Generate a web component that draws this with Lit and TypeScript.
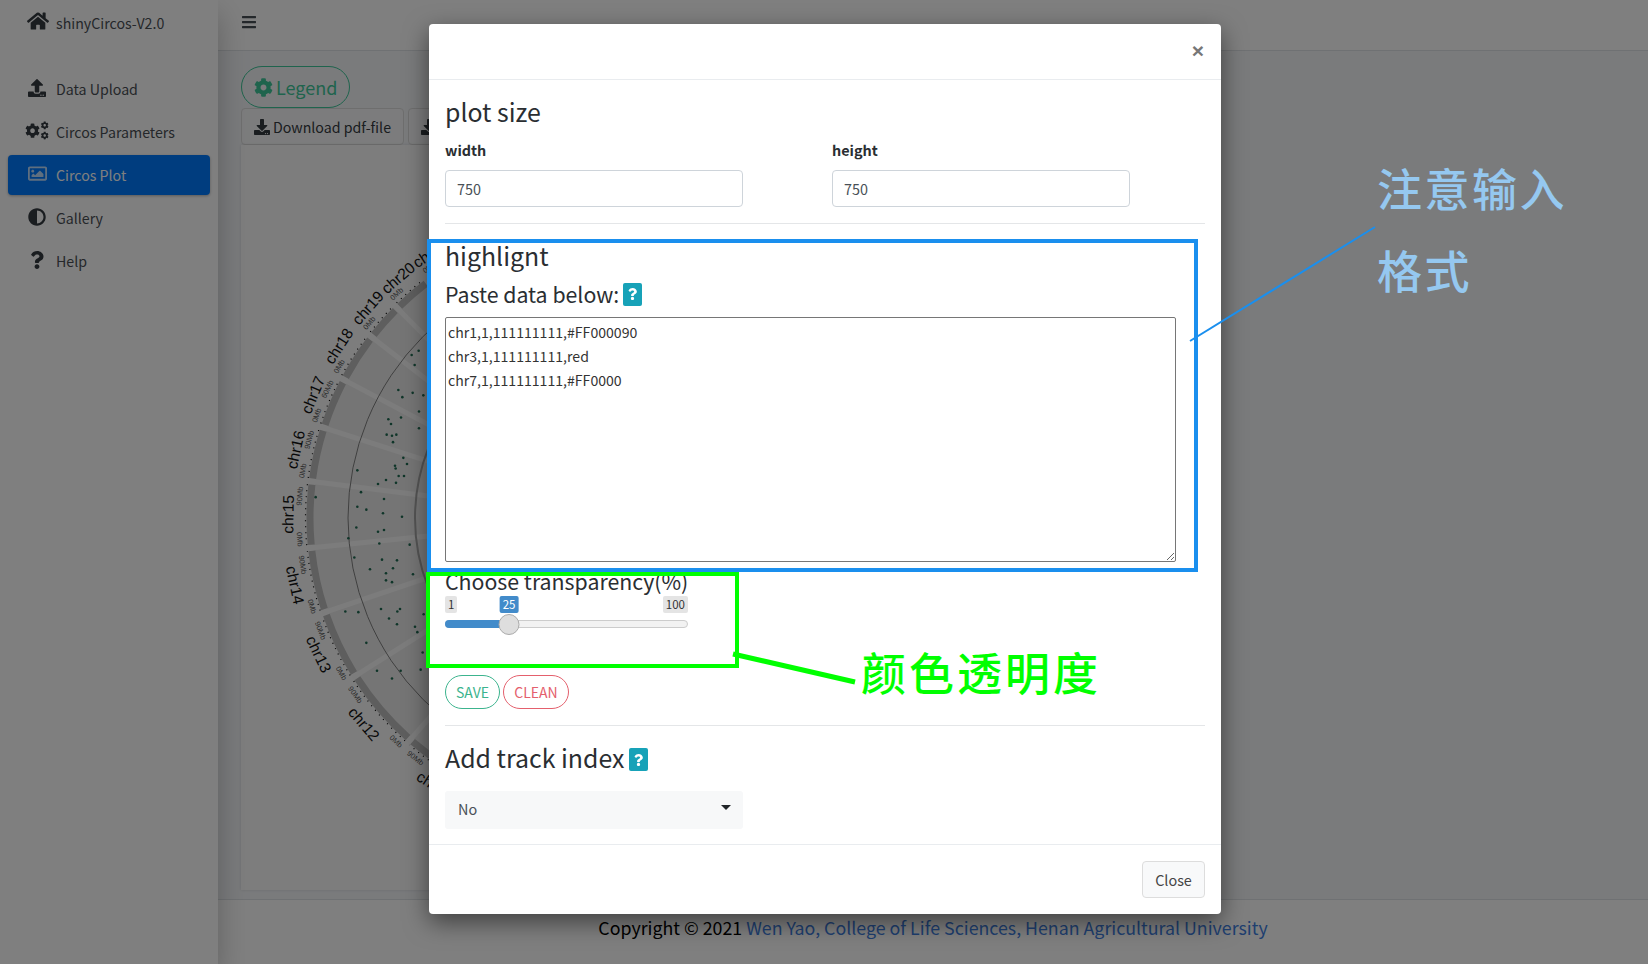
import { LitElement, html, css, svg } from 'lit';
import { customElement } from 'lit/decorators.js';

const COG = 'M487.4 315.7l-42.6-24.6c4.3-23.2 4.3-47 0-70.2l42.6-24.6c4.9-2.8 7.1-8.6 5.5-14-11.1-35.6-30-67.8-54.7-94.6-3.8-4.1-10-5.1-14.8-2.3L380.8 110c-17.9-15.4-38.5-27.3-60.8-35.1V25.8c0-5.6-3.9-10.5-9.4-11.7-36.7-8.2-74.3-7.8-109.2 0-5.5 1.2-9.4 6.1-9.4 11.7V75c-22.2 7.9-42.8 19.8-60.8 35.1L88.7 85.5c-4.9-2.8-11-1.9-14.8 2.3-24.7 26.7-43.6 58.9-54.7 94.6-1.7 5.4.6 11.2 5.5 14L67.3 221c-4.3 23.2-4.3 47 0 70.2l-42.6 24.6c-4.9 2.8-7.1 8.6-5.5 14 11.1 35.6 30 67.8 54.7 94.6 3.8 4.1 10 5.1 14.8 2.3l42.6-24.6c17.9 15.4 38.5 27.3 60.8 35.1v49.2c0 5.6 3.9 10.5 9.4 11.7 36.7 8.2 74.3 7.8 109.2 0 5.5-1.2 9.4-6.1 9.4-11.7v-49.2c22.2-7.9 42.8-19.8 60.8-35.1l42.6 24.6c4.9 2.8 11 1.9 14.8-2.3 24.7-26.7 43.6-58.9 54.7-94.6 1.5-5.5-.7-11.3-5.6-14.1zM256 336c-44.1 0-80-35.9-80-80s35.9-80 80-80 80 35.9 80 80-35.9 80-80 80z';
const DOWNLOAD = 'M216 0h80c13.3 0 24 10.7 24 24v168h87.7c17.8 0 26.7 21.5 14.1 34.1L269.7 378.3c-7.5 7.5-19.8 7.5-27.3 0L90.1 226.1c-12.6-12.6-3.7-34.1 14.1-34.1H192V24c0-13.3 10.7-24 24-24zm296 376v112c0 13.3-10.7 24-24 24H24c-13.3 0-24-10.7-24-24V376c0-13.3 10.7-24 24-24h146.7l49 49c20.1 20.1 52.5 20.1 72.6 0l49-49H488c13.3 0 24 10.7 24 24zm-124 88c0-11-9-20-20-20s-20 9-20 20 9 20 20 20 20-9 20-20zm64 0c0-11-9-20-20-20s-20 9-20 20 9 20 20 20 20-9 20-20z';
const UPLOAD = 'M296 384h-80c-13.3 0-24-10.7-24-24V192h-87.7c-17.8 0-26.7-21.5-14.1-34.1L242.3 5.7c7.5-7.5 19.8-7.5 27.3 0l152.2 152.2c12.6 12.6 3.7 34.1-14.1 34.1H320v168c0 13.3-10.7 24-24 24zm216-8v112c0 13.3-10.7 24-24 24H24c-13.3 0-24-10.7-24-24V376c0-13.3 10.7-24 24-24h136v8c0 30.9 25.1 56 56 56h80c30.9 0 56-25.1 56-56v-8h136c13.3 0 24 10.7 24 24zm-124 88c0-11-9-20-20-20s-20 9-20 20 9 20 20 20 20-9 20-20zm64 0c0-11-9-20-20-20s-20 9-20 20 9 20 20 20 20-9 20-20z';
const HOME = 'M280.37 148.26L96 300.11V464a16 16 0 0 0 16 16l112.06-.29a16 16 0 0 0 15.92-16V368a16 16 0 0 1 16-16h64a16 16 0 0 1 16 16v95.64a16 16 0 0 0 16 16.05L464 480a16 16 0 0 0 16-16V300L295.67 148.26a12.19 12.19 0 0 0-15.3 0zM571.6 251.47L488 182.56V44.05a12 12 0 0 0-12-12h-56a12 12 0 0 0-12 12v72.61L318.47 43a48 48 0 0 0-61 0L4.34 251.47a12 12 0 0 0-1.6 16.9l25.5 31A12 12 0 0 0 45.15 301l235.22-193.74a12.19 12.19 0 0 1 15.3 0L530.9 301a12 12 0 0 0 16.9-1.6l25.5-31a12 12 0 0 0-1.7-16.93z';
const IMAGE = 'M464 64H48C21.49 64 0 85.49 0 112v288c0 26.51 21.49 48 48 48h416c26.51 0 48-21.49 48-48V112c0-26.51-21.49-48-48-48zm-6 336H54a6 6 0 0 1-6-6V118a6 6 0 0 1 6-6h404a6 6 0 0 1 6 6v276a6 6 0 0 1-6 6zM128 152c-22.091 0-40 17.909-40 40s17.909 40 40 40 40-17.909 40-40-17.909-40-40-40zM96 352h320v-80l-87.515-87.515c-4.686-4.686-12.284-4.686-16.971 0L192 304l-39.515-39.515c-4.686-4.686-12.284-4.686-16.971 0L96 304v48z';
const ADJUST = 'M8 256c0 136.967 111.033 248 248 248s248-111.033 248-248S392.967 8 256 8 8 119.033 8 256zm248 184V72c101.705 0 184 82.311 184 184 0 101.705-82.311 184-184 184z';
const QUESTION = 'M202.021 0C122.202 0 70.503 32.703 29.914 91.026c-7.363 10.58-5.093 25.086 5.178 32.874l43.138 32.709c10.373 7.865 25.132 6.026 33.253-4.148 25.049-31.381 43.63-49.449 82.757-49.449 30.764 0 68.816 19.799 68.816 49.631 0 22.552-18.617 34.134-48.993 51.164-35.423 19.86-82.299 44.576-82.299 106.405V320c0 13.255 10.745 24 24 24h72.471c13.255 0 24-10.745 24-24v-5.773c0-42.86 125.268-44.645 125.268-160.627C377.504 66.256 286.902 0 202.021 0zM192 373.459c-38.196 0-69.271 31.075-69.271 69.271 0 38.195 31.075 69.27 69.271 69.27s69.271-31.075 69.271-69.271-31.075-69.27-69.271-69.27z';
const BARS = 'M16 132h416c8.837 0 16-7.163 16-16V76c0-8.837-7.163-16-16-16H16C7.163 60 0 67.163 0 76v40c0 8.837 7.163 16 16 16zm0 160h416c8.837 0 16-7.163 16-16v-40c0-8.837-7.163-16-16-16H16c-8.837 0-16 7.163-16 16v40c0 8.837 7.163 16 16 16zm0 160h416c8.837 0 16-7.163 16-16v-40c0-8.837-7.163-16-16-16H16c-8.837 0-16 7.163-16 16v40c0 8.837 7.163 16 16 16z';

const icon = (d: string, w: number, h: number, vw = 512) =>
  html`<svg width=${w} height=${h} viewBox="0 0 ${vw} 512" fill="currentColor"><path d=${d}></path></svg>`;

const cogsIcon = html`<svg width="24" height="19" viewBox="0 0 640 512" fill="currentColor">
  <g transform="translate(0 60) scale(.78)"><path d=${COG}></path></g>
  <g transform="translate(420 10) scale(.42)"><path d=${COG}></path></g>
  <g transform="translate(420 285) scale(.42)"><path d=${COG}></path></g>
</svg>`;

// circos plot, in page coordinates
const CX = 605;
const CY = 518;
const R = 298;

const CHROMS: [string, number, number, string][] = [
  ['chr11', -66, -48.7, '90Mb'],
  ['chr12', -48.7, -32.3, '90Mb'],
  ['chr13', -32.3, -18.6, '90Mb'],
  ['chr14', -18.6, -5.8, '90Mb'],
  ['chr15', -5.8, 7.1, '90Mb'],
  ['chr16', 7.1, 17.8, '90Mb'],
  ['chr17', 17.8, 27.9, '60Mb'],
  ['chr18', 27.9, 37.8, ''],
  ['chr19', 37.8, 45.3, ''],
  ['chr20', 45.3, 53.2, ''],
  ['chr21', 53.2, 60, ''],
];

const DOTS = [[455,322],[476,310],[464,350],[415,420],[427,440],[458,428],[490,435],[477,480],[385,502],[393,515],[423,497],[380,545],[396,548],[409,545],[399,566],[477,527],[430,610],[441,627],[405,632],[407,640],[416,661],[432,661],[408,680],[378,672],[354,683],[292,645],[303,706],[372,725],[167,720],[292,747],[319,755],[369,765],[426,775],[289,805],[354,817],[372,812],[358,850],[449,853],[265,835],[283,889],[366,895],[411,897],[330,922],[399,919],[378,933],[459,936],[378,953],[396,958],[256,1040],[295,1042],[363,1033],[420,1033],[412,1040],[387,1060],[491,1048],[411,1076],[465,1083],[472,1098],[319,1128],[488,1155],[351,1206],[422,1206],[482,1203],[396,1228]];

const polar = (r: number, deg: number) => {
  const a = (deg * Math.PI) / 180;
  return [CX - r * Math.cos(a), CY - r * Math.sin(a)];
};

const arc = (r: number, from: number, to: number) => {
  const [x1, y1] = polar(r, from);
  const [x2, y2] = polar(r, to);
  return `M${x1} ${y1}A${r} ${r} 0 0 1 ${x2} ${y2}`;
};

const radialText = (r: number, deg: number, text: string, cls: string) => {
  const [x, y] = polar(r, deg);
  const rot = deg > -3 ? deg - 90 : deg + 90;
  return svg`<text class=${cls} x=${x} y=${y} text-anchor="middle" dominant-baseline="central" transform="rotate(${rot} ${x} ${y})">${text}</text>`;
};

const circos = () => svg`
  <circle class="sector" cx=${CX} cy=${CY} r=${R - 6}></circle>
  ${CHROMS.map(([, low]) => {
    const [x1, y1] = polar(R + 1, low);
    const [x2, y2] = polar(140, low);
    return svg`<line class="spoke" x1=${x1} y1=${y1} x2=${x2} y2=${y2}></line>`;
  })}
  <circle class="ring" cx=${CX} cy=${CY} r="257"></circle>
  <circle class="ring inner" cx=${CX} cy=${CY} r="190"></circle>
  ${CHROMS.map(([name, low, high, last]) => {
    const mid = (low + high) / 2;
    return svg`
      <path class="band" d=${arc(R - 3, low + 0.6, high - 0.6)}></path>
      <path class="ticks" d=${arc(R + 1.5, low + 0.6, high - 0.6)}></path>
      ${radialText(317, mid, name, 'chr')}
      ${radialText(306, low + 1.8, '0Mb', 'mb')}
      ${last ? radialText(306, high - 3, last, 'mb') : ''}
    `;
  })}
  ${DOTS.map(([x, y]) => svg`<circle class="dot" cx=${260 + x / 3} cy=${240 + y / 2.8} r="1.3"></circle>`)}
`;

@customElement('app-root')
export class AppRoot extends LitElement {
  static styles = css`
    :host {
      display: block;
      position: relative;
      width: 1648px;
      height: 964px;
      overflow: hidden;
      font-family: 'Noto Sans CJK SC', 'Noto Sans', sans-serif;
      font-size: 14.2px;
      color: #2a2e32;
    }

    * {
      box-sizing: border-box;
    }

    .app {
      display: grid;
      grid-template-columns: 218px 1fr;
      height: 100%;
      background: #f4f6f9;
    }

    .sidebar {
      background: #fff;
      box-shadow: 0 14px 28px rgba(0, 0, 0, 0.25);
      color: #4a4f55;
      z-index: 1;
    }

    .brand {
      display: flex;
      align-items: center;
      gap: 7px;
      height: 45px;
      padding-left: 27px;
      font-size: 14.2px;
    }

    .brand svg {
      color: #343a40;
      margin-top: -3px;
    }

    .nav {
      display: flex;
      flex-direction: column;
      gap: 3px;
      padding: 24px 8px 0;
    }

    .nav-item {
      display: flex;
      align-items: center;
      height: 40px;
      border-radius: 4px;
      font-size: 14.2px;
    }

    .nav-item .ico {
      display: flex;
      justify-content: center;
      color: #343a40;
      width: 48px;
      padding-left: 10px;
      margin-top: -3px;
    }

    .nav-item.active {
      background: #007bff;
      color: #fff;
      box-shadow: 0 1px 3px rgba(0, 0, 0, 0.3);
    }

    .nav-item.active .ico {
      color: #fff;
      opacity: 0.75;
    }

    .main {
      display: flex;
      flex-direction: column;
      min-width: 0;
    }

    .topbar {
      display: flex;
      align-items: center;
      height: 51px;
      padding: 0 0 6px 24px;
      background: #fff;
      border-bottom: 1px solid #dee2e6;
      color: #495057;
    }

    .content {
      flex: 1;
      min-height: 0;
      padding: 15px 0 9px 23px;
      display: flex;
      flex-direction: column;
      align-items: flex-start;
    }

    .btn-legend {
      display: flex;
      align-items: center;
      gap: 3px;
      height: 42px;
      width: 109px;
      padding-left: 12px;
      border: 1.5px solid #3fc89a;
      border-radius: 21px;
      color: #3fc89a;
      font-size: 18px;
    }

    .tools {
      display: flex;
      gap: 4px;
    }

    .btn-tool {
      display: flex;
      align-items: center;
      gap: 3px;
      height: 37px;
      padding: 0 12px;
      border: 1px solid #ddd;
      border-radius: 4px;
      font-size: 14.2px;
      background: #f8f9fa;
      color: #343a40;
    }

    .card {
      width: 760px;
      flex: 1;
      min-height: 0;
      background: #fbfbfb;
      box-shadow: 0 0 3px rgba(0, 0, 0, 0.12);
    }

    .card svg {
      display: block;
    }

    .sector {
      fill: #ebebeb;
    }

    .spoke {
      stroke: #f9f9f9;
      stroke-width: 5;
    }

    .ring {
      fill: none;
      stroke: #808080;
      stroke-width: 1;
    }

    .ring.inner {
      stroke: #a8a8a8;
      stroke-width: 2;
    }

    .band {
      fill: none;
      stroke: #bcbcbc;
      stroke-width: 7;
    }

    .ticks {
      fill: none;
      stroke: #000;
      stroke-width: 1.2;
      stroke-dasharray: 1 5;
    }

    .chr {
      font-family: 'Liberation Sans', sans-serif;
      font-size: 15.5px;
      fill: #111;
    }

    .mb {
      font-family: 'Liberation Sans', sans-serif;
      font-size: 7.5px;
      fill: #555;
    }

    .dot {
      fill: #1f6a52;
    }

    .footer {
      height: 65px;
      padding-top: 14px;
      border-top: 1px solid #dee2e6;
      background: #fff;
      text-align: center;
      font-size: 17.8px;
      line-height: 26px;
      color: #000;
    }

    .footer a {
      color: #3f7fe0;
    }

    .backdrop {
      position: absolute;
      inset: 0;
      background: rgba(0, 0, 0, 0.5);
      z-index: 2;
    }

    .modal {
      position: absolute;
      left: 429px;
      top: 24px;
      width: 792px;
      height: 890px;
      display: flex;
      flex-direction: column;
      background: #fff;
      border-radius: 4px;
      box-shadow: 0 8px 24px rgba(0, 0, 0, 0.5);
      z-index: 3;
    }

    .modal-header {
      display: flex;
      justify-content: flex-end;
      align-items: center;
      height: 56px;
      padding: 0 15px 0 0;
      border-bottom: 1px solid #e9ecef;
    }

    .close-x {
      font-family: 'Liberation Sans', sans-serif;
      font-size: 21px;
      font-weight: 700;
      color: #777;
      width: 16px;
      text-align: center;
      margin-top: -1px;
    }

    .modal-body {
      flex: 1;
      padding: 16px 16px 0;
    }

    h3 {
      margin: 0;
      padding-bottom: 4px;
      font-size: 24.9px;
      font-weight: 400;
      line-height: 30px;
    }

    hr {
      margin: 16px 0;
      border: 0;
      border-top: 1px solid #e4e6e8;
    }

    .size-row {
      display: grid;
      grid-template-columns: 298px 298px;
      column-gap: 89px;
      margin-top: 8px;
    }

    .size-row label {
      display: block;
      font-weight: 700;
      font-size: 14.4px;
      line-height: 24px;
      margin-bottom: 8px;
    }

    .field {
      height: 37px;
      padding: 0 11px;
      display: flex;
      align-items: center;
      border: 1px solid #ced4da;
      border-radius: 4px;
      color: #495057;
      font-size: 14.4px;
    }

    .field-label {
      display: flex;
      align-items: center;
      gap: 4px;
      font-size: 21.3px;
      line-height: 26px;
    }

    .paste {
      margin-top: 7px;
      padding-bottom: 1px;
    }

    .help {
      display: inline-flex;
      align-items: center;
      justify-content: center;
      width: 19px;
      height: 23px;
      background: #17a2b8;
      border-radius: 2px;
      color: #fff;
    }

    .data {
      display: block;
      width: 731px;
      height: 245px;
      margin-top: 9px;
      padding: 2px 2px;
      border: 1px solid #767676;
      border-radius: 2px;
      color: #333;
      font-family: inherit;
      font-size: 14.1px;
      line-height: 24px;
      white-space: pre;
      resize: both;
      outline: none;
      overflow: hidden;
    }

    .transparency {
      margin-top: 6px;
      height: 107px;
    }

    .slider {
      position: relative;
      width: 243px;
      height: 40px;
      margin-top: 2px;
    }

    .tag {
      position: absolute;
      top: 0;
      height: 17px;
      padding: 0 3px;
      background: #e4e4e4;
      border-radius: 2px;
      color: #333;
      font-size: 11.5px;
      line-height: 17px;
    }

    .tag.max {
      right: 0;
    }

    .tag.value {
      background: #428bca;
      color: #fff;
      transform: translateX(-50%);
    }

    .track {
      position: absolute;
      left: 0;
      right: 0;
      top: 24px;
      height: 8px;
      border: 1px solid #ccc;
      border-radius: 4px;
      background: #f2f2f2;
    }

    .fill {
      position: absolute;
      left: 0;
      top: 24px;
      height: 8px;
      border-radius: 4px 0 0 4px;
      background: #428bca;
    }

    .thumb {
      position: absolute;
      top: 18px;
      width: 21px;
      height: 21px;
      border: 1px solid #ababab;
      border-radius: 50%;
      background: #dedede;
      transform: translateX(-50%);
    }

    .actions {
      display: flex;
      gap: 3px;
    }

    .pill {
      display: flex;
      align-items: center;
      justify-content: center;
      height: 34px;
      border-radius: 17px;
      font-size: 14px;
    }

    .pill.save {
      width: 55px;
      color: #3cb48e;
      border: 1px solid #3cb48e;
    }

    .pill.clean {
      width: 66px;
      color: #e4606d;
      border: 1px solid #e4606d;
    }

    .track-index {
      display: flex;
      align-items: center;
      gap: 5px;
    }

    .track-index .help {
      margin-top: 5px;
    }

    .select {
      display: flex;
      align-items: center;
      justify-content: space-between;
      width: 298px;
      height: 38px;
      margin-top: 15px;
      padding: 0 12px 3px 13px;
      background: #f7f8f9;
      border-radius: 3px;
      color: #495057;
      font-size: 14.4px;
    }

    .caret {
      width: 0;
      height: 0;
      margin-top: -2px;
      border-left: 5px solid transparent;
      border-right: 5px solid transparent;
      border-top: 5px solid #212529;
    }

    .modal-footer {
      display: flex;
      justify-content: flex-end;
      padding: 16px;
      border-top: 1px solid #e9ecef;
    }

    .btn-close {
      display: flex;
      align-items: center;
      justify-content: center;
      width: 63px;
      height: 37px;
      background: #f8f9fa;
      border: 1px solid #ddd;
      border-radius: 4px;
      color: #444;
      font-size: 14.4px;
    }

    .note {
      position: absolute;
      z-index: 4;
      pointer-events: none;
    }

    .box-blue {
      left: 427px;
      top: 239px;
      width: 771px;
      height: 333px;
      border: 4px solid #1a8fee;
    }

    .box-green {
      left: 426px;
      top: 572px;
      width: 313px;
      height: 96px;
      border: 4px solid #00ff00;
    }

    .note-lines {
      left: 0;
      top: 0;
    }

    .note-text {
      font-size: 45px;
      font-weight: 500;
      white-space: nowrap;
    }

    .note-format {
      left: 1377px;
      top: 147px;
      width: 200px;
      color: #95c8f0;
      letter-spacing: 2.5px;
      line-height: 82px;
      white-space: normal;
    }

    .note-alpha {
      left: 861px;
      top: 639px;
      color: #00ff00;
      letter-spacing: 3px;
      line-height: 66px;
    }
  `;

  render() {
    const pct = (25 - 1) / 99;
    const thumbX = 10 + pct * 223;
    return html`
      <div class="app">
        <aside class="sidebar">
          <div class="brand">${icon(HOME, 22, 20, 576)}<span>shinyCircos-V2.0</span></div>
          <nav class="nav">
            <div class="nav-item"><span class="ico">${icon(UPLOAD, 18, 18)}</span>Data Upload</div>
            <div class="nav-item"><span class="ico">${cogsIcon}</span>Circos Parameters</div>
            <div class="nav-item active"><span class="ico">${icon(IMAGE, 19, 19)}</span>Circos Plot</div>
            <div class="nav-item"><span class="ico">${icon(ADJUST, 18, 18)}</span>Gallery</div>
            <div class="nav-item"><span class="ico">${icon(QUESTION, 14, 18, 384)}</span>Help</div>
          </nav>
        </aside>
        <div class="main">
          <header class="topbar">${icon(BARS, 14, 16, 448)}</header>
          <section class="content">
            <div class="btn-legend">${icon(COG, 19, 19)}<span>Legend</span></div>
            <div class="tools">
              <div class="btn-tool">${icon(DOWNLOAD, 16, 16)}<span>Download pdf-file</span></div>
              <div class="btn-tool">${icon(DOWNLOAD, 16, 16)}<span>Download svg-file</span></div>
            </div>
            <div class="card">
              <svg width="760" height="745" viewBox="241 145 760 745">${circos()}</svg>
            </div>
          </section>
          <footer class="footer">
            Copyright © 2021 <a>Wen Yao, College of Life Sciences, Henan Agricultural University</a>
          </footer>
        </div>
      </div>

      <div class="backdrop"></div>

      <div class="modal">
        <div class="modal-header"><span class="close-x">×</span></div>
        <div class="modal-body">
          <h3>plot size</h3>
          <div class="size-row">
            <div><label>width</label><div class="field">750</div></div>
            <div><label>height</label><div class="field">750</div></div>
          </div>
          <hr />
          <h3>highlignt</h3>
          <div class="field-label paste">
            Paste data below:<span class="help">${icon(QUESTION, 9, 14, 384)}</span>
          </div>
          <textarea class="data" .value=${'chr1,1,111111111,#FF000090\nchr3,1,111111111,red\nchr7,1,111111111,#FF0000'}></textarea>
          <div class="transparency">
            <div class="field-label">Choose transparency(%)</div>
            <div class="slider">
              <span class="tag">1</span>
              <span class="tag max">100</span>
              <span class="tag value" style="left:${thumbX}px">25</span>
              <div class="track"></div>
              <div class="fill" style="width:${thumbX}px"></div>
              <div class="thumb" style="left:${thumbX}px"></div>
            </div>
          </div>
          <div class="actions">
            <div class="pill save">SAVE</div>
            <div class="pill clean">CLEAN</div>
          </div>
          <hr />
          <h3 class="track-index">Add track index<span class="help">${icon(QUESTION, 9, 14, 384)}</span></h3>
          <div class="select"><span>No</span><span class="caret"></span></div>
        </div>
        <div class="modal-footer"><div class="btn-close">Close</div></div>
      </div>

      <div class="note box-blue"></div>
      <div class="note box-green"></div>
      <svg class="note note-lines" width="1648" height="964">
        <line x1="1190" y1="341" x2="1375" y2="227" stroke="#1a8fee" stroke-width="2"></line>
        <line x1="733" y1="654" x2="855" y2="682" stroke="#00ff00" stroke-width="5"></line>
      </svg>
      <div class="note note-text note-format">注意输入 格式</div>
      <div class="note note-text note-alpha">颜色透明度</div>
    `;
  }
}
